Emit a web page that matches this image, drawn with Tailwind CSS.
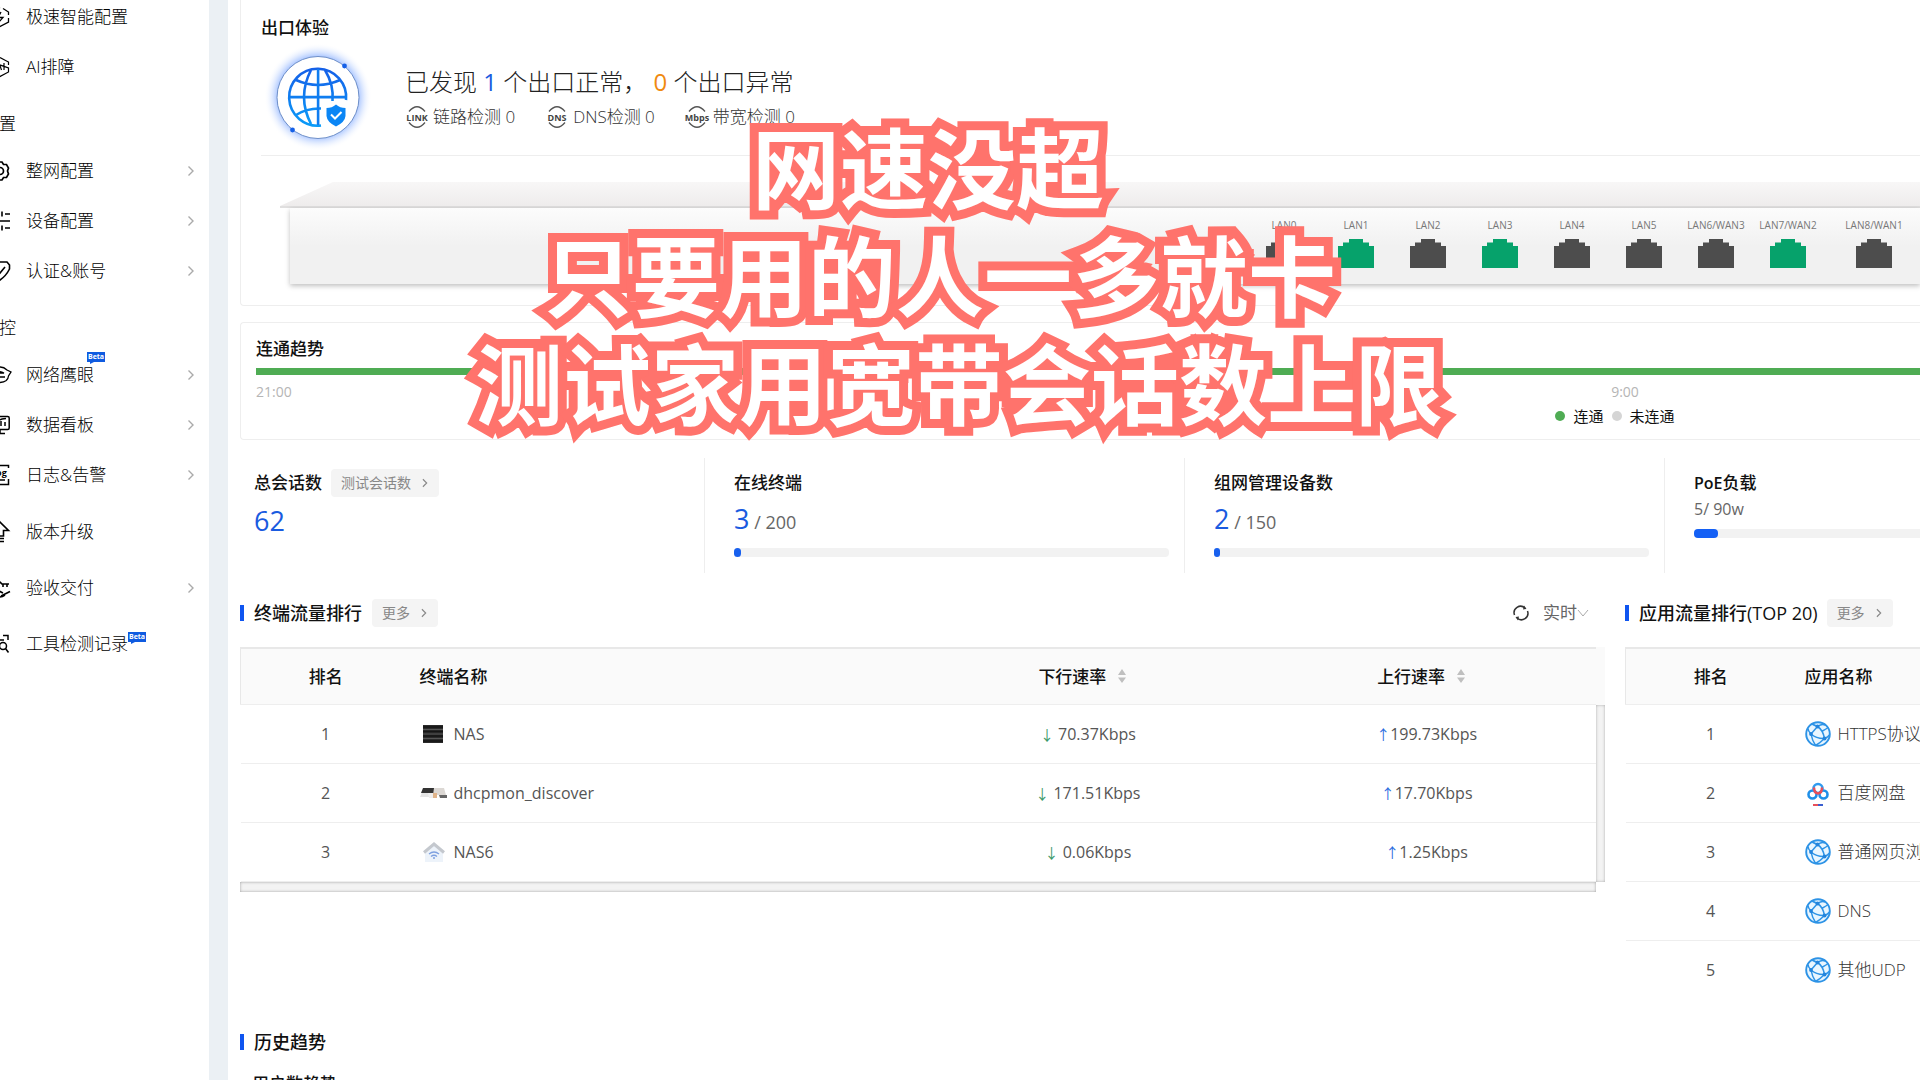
<!DOCTYPE html>
<html lang="zh-CN">
<head>
<meta charset="utf-8">
<meta name="viewport" content="width=device-width, initial-scale=1">
<title>网络总览</title>
<script src="https://cdn.jsdelivr.net/npm/@tailwindcss/browser@4"></script>
</head>
<body class="relative flex h-screen overflow-hidden bg-white font-['Open_Sans','Noto_Sans_CJK_SC',sans-serif] text-[17px] leading-6 text-[#111]">

<!-- shared shapes -->
<svg class="hidden" aria-hidden="true">
  <symbol id="chev" viewBox="0 0 8 12"><path d="M1.500 1.500 6 6l-4.500 4.500" fill="none" stroke="currentColor" stroke-width="1.400"/></symbol>
  <symbol id="port" viewBox="0 0 36 29"><path d="M0 7H5V3.500H11V0H25V3.500H31V7H36V29H0Z" fill="currentColor"/></symbol>
  <symbol id="sort" viewBox="0 0 8 14"><path d="M4 0 8 6H0ZM4 14 0 8.500H8Z" fill="#bfbfbf"/></symbol>
  <symbol id="net" viewBox="0 0 26 26">
    <circle cx="13" cy="13" r="11.800" fill="#e9f6ff" stroke="#2d93e6" stroke-width="1.900"/>
    <g fill="none" stroke="#2d93e6" stroke-width="1.500"><path d="M12.500 5.500 6 13M12.500 5.500Q18 9 19.500 17.500M6 13Q12 18 19.500 17.500M12.500 5.500Q17 2.500 20 4M12.500 5.500Q9 4 7 3M6 13Q3 10 3 7.500M6 13Q7 19 10.500 24.500M19.500 17.500Q15 22 10.500 24.500M19.500 17.500Q23 16 24.500 14M17.500 10Q21 8 22.500 7"/></g>
    <g fill="#2384dc"><circle cx="12.500" cy="5.500" r="2"/><circle cx="6" cy="13" r="1.900"/><circle cx="19.500" cy="17.500" r="2"/></g>
  </symbol>
</svg>

<aside class="w-[209px] shrink-0 overflow-hidden bg-white">
  <nav class="-mt-2 font-light text-black [&_a]:flex [&_a]:h-[50px] [&_a]:items-center [&_a]:gap-4 [&_a]:pr-[14px] [&_a>svg:first-child]:-ml-[10px] [&_a>svg:first-child]:size-5 [&_a>svg:first-child]:shrink-0 [&_a>svg:first-child]:overflow-visible">
    <a href="#"><svg viewBox="0 0 20 20" fill="none" stroke="currentColor" stroke-width="1.300"><path d="M13 1.500 18.500 5V8M18.500 11V15L10 19.500 1.500 15V5L10 .500M11 5 8 10.500H13L9 15"/></svg>极速智能配置</a>
    <a href="#"><svg viewBox="0 0 20 20" fill="none" stroke="currentColor" stroke-width="1.200"><path d="M10 .500 18.500 5V8M18.500 11V15L10 19.500 1.500 15V5ZM6 13 9 6 11.500 13M14 6V13"/></svg>AI排障</a>
    <h2 class="-ml-[18px] h-[54px] pt-5">配置</h2>
    <a href="#"><svg viewBox="0 0 20 20" fill="none" stroke="currentColor" stroke-width="1.700"><path d="M8 1H12L13.500 3.500 16.500 3.500 18.500 7 17.500 10 18.500 13 16.500 16.500 13.500 16.500 12 19H8L6.500 16.500 3.500 16.500 1.500 13 2.500 10 1.500 7 3.500 3.500 6.500 3.500Z"/><circle cx="10" cy="10" r="3.500"/></svg><span class="flex-1">整网配置</span><svg class="h-3 w-2 text-[#aaa]"><use href="#chev"/></svg></a>
    <a href="#"><svg viewBox="0 0 20 20" fill="none" stroke="currentColor" stroke-width="1.600"><path d="M1 3H8M15 3H20M12 .500V5.500M1 10H20M1 17H8M15 17H20M12 14.500V19.500"/></svg><span class="flex-1">设备配置</span><svg class="h-3 w-2 text-[#aaa]"><use href="#chev"/></svg></a>
    <a href="#"><svg viewBox="0 0 20 20" fill="none" stroke="currentColor" stroke-width="1.600"><path d="M3 1H17L19.500 4 19.500 8Q16 15 10 19 4 15 1 8V4ZM6 8 10 12 15 6"/></svg><span class="flex-1">认证&amp;账号</span><svg class="h-3 w-2 text-[#aaa]"><use href="#chev"/></svg></a>
    <h2 class="-ml-[18px] h-[54px] pt-5">监控</h2>
    <a href="#"><svg viewBox="0 0 20 20" fill="none" stroke="currentColor" stroke-width="1.300"><path d="M2 5Q11-1 17 5L21 7 18.500 11Q18 17 10 17.500M2 8Q8 5 14 8H9M10 12H15"/></svg><span class="flex-1"><span class="relative">网络鹰眼<span class="absolute -top-[11px] left-[61px] h-[10px] w-[18px] bg-[#0f5be0] text-center text-[7px] leading-[10px] font-bold text-white after:absolute after:top-full after:left-[3px] after:border-t-2 after:border-r-4 after:border-t-[#0f5be0] after:border-r-transparent after:content-['']">Beta</span></span></span><svg class="h-3 w-2 text-[#aaa]"><use href="#chev"/></svg></a>
    <a href="#"><svg viewBox="0 0 20 20" fill="none" stroke="currentColor" stroke-width="1.500"><rect x="1" y="1.500" width="18.200" height="13" rx="1.500"/><path d="M7 11V8M11 11V6M15 11V7M8 5.500 12 4 16 3.500M10 15V18M5 18.500H15"/></svg><span class="flex-1">数据看板</span><svg class="h-3 w-2 text-[#aaa]"><use href="#chev"/></svg></a>
    <a href="#"><svg viewBox="0 0 20 20" fill="none" stroke="currentColor" stroke-width="1.500"><path d="M1 4V.500H18.500V3M1 14V19.500H18.500V14M9 15H15"/><text x="1" y="11" font-size="9" font-weight="700" fill="currentColor" stroke="none">Log</text></svg><span class="flex-1">日志&amp;告警</span><svg class="h-3 w-2 text-[#aaa]"><use href="#chev"/></svg></a>
    <div class="mt-1 [&>a]:h-14">
      <a href="#"><svg viewBox="0 0 20 20" fill="none" stroke="currentColor" stroke-width="1.600"><path d="M10 0 18.500 8.500H13.500V14H6.500V8.500H1.500ZM6 16.500H14M6 19.500H14"/></svg>版本升级</a>
      <a href="#"><svg viewBox="0 0 20 20" fill="none" stroke="currentColor" stroke-width="1.600"><path d="M4 4H10L12 6H19M13 6V9M17 6V9M1 13H9L13 15M11 18 20 13.500M1 19H9Q12 19 15 17"/></svg><span class="flex-1">验收交付</span><svg class="h-3 w-2 text-[#aaa]"><use href="#chev"/></svg></a>
      <a href="#"><svg viewBox="0 0 20 20" fill="none" stroke="currentColor" stroke-width="1.500"><path d="M13 1.500H18V6M7 1.500H2V6M2 13V18.500H8M8 6H14M6 6V13"/><circle cx="13" cy="12" r="3.500"/><path d="M15.500 14.500 18.500 18.500"/></svg><span class="relative">工具检测记录<span class="absolute top-0 left-[102px] h-[10px] w-[18px] bg-[#0f5be0] text-center text-[7px] leading-[10px] font-bold text-white after:absolute after:top-full after:left-[3px] after:border-t-2 after:border-r-4 after:border-t-[#0f5be0] after:border-r-transparent after:content-['']">Beta</span></span></a>
    </div>
  </nav>
</aside>
<div class="w-[19px] shrink-0 bg-[#ebf0f4]"></div>

<main class="min-w-0 flex-1 pl-3">

  <section class="rounded-bl border-b border-l border-[#eee] pt-4 pb-[21px] pl-5">
    <h2 class="font-medium">出口体验</h2>
    <div class="mt-2 flex h-[98px] gap-[30px]">
      <svg class="h-[98px] w-[114px] shrink-0 overflow-visible" viewBox="0 0 114 98">
        <defs>
          <radialGradient id="halo"><stop offset=".7" stop-color="#8db2ff"/><stop offset=".82" stop-color="#c8daff" stop-opacity=".8"/><stop offset="1" stop-color="#fff" stop-opacity="0"/></radialGradient>
          <linearGradient id="gb" x1="0" y1="0" x2="0" y2="1"><stop offset="0" stop-color="#1560e8"/><stop offset="1" stop-color="#0a9bf8"/></linearGradient>
        </defs>
        <circle cx="57" cy="49" r="54" fill="url(#halo)"/>
        <circle cx="57" cy="49.500" r="41" fill="#fff" stroke="#6e8fc8"/>
        <circle cx="83.500" cy="18" r="2.400" fill="#1560e8"/><circle cx="31.500" cy="82" r="2.400" fill="#1560e8"/>
        <g fill="none" stroke="url(#gb)" stroke-width="2.600">
          <path d="M60 77.500A28.500 28.500 0 1 1 85 52"/>
          <path d="M50 22Q36 49 50 76M64 22Q73 37 71.500 53M35 32Q57 42 79 32M35 67Q46 60 60 60.500"/>
        </g>
        <path d="M57.100 21V77" stroke="#0f7df0" stroke-width="2.600"/><path d="M28.500 49.100H85.500" stroke="#0f7df0" stroke-width="2.600"/>
        <path d="M75 56.500Q79 60 84.500 60V68Q84 74 75 78.500 66 74 65.500 68V60Q71 60 75 56.500Z" fill="#0b86f5"/>
        <path d="M70 66.500 74 70.500 80.500 64" fill="none" stroke="#fff" stroke-width="2"/>
      </svg>
      <div class="pt-4">
        <p class="h-9 text-[24px] leading-9 font-light whitespace-pre text-[#222]">已发现 <span class="font-normal text-[#1a5be0]">1</span> 个出口正常， <span class="font-normal text-[#f08a10]">0</span> 个出口异常</p>
        <ul class="flex h-[34px] items-center gap-[30px] font-light text-[#333]">
          <li class="flex items-center gap-1"><svg class="h-6 w-6" viewBox="0 0 24 24"><path d="M4 6.500Q12-3 20 6.500M4 17.500Q12 27 20 17.500" fill="none" stroke="#555" stroke-width="1.300"/><text x="12" y="15.500" font-size="9" font-weight="700" text-anchor="middle" fill="#444">LINK</text></svg>链路检测 0</li>
          <li class="flex items-center gap-1"><svg class="h-6 w-6" viewBox="0 0 24 24"><path d="M4 6.500Q12-3 20 6.500M4 17.500Q12 27 20 17.500" fill="none" stroke="#555" stroke-width="1.300"/><text x="12" y="15.500" font-size="9" font-weight="700" text-anchor="middle" fill="#444">DNS</text></svg>DNS检测 0</li>
          <li class="flex items-center gap-1"><svg class="h-6 w-6 overflow-visible" viewBox="0 0 24 24"><path d="M4 6.500Q12-3 20 6.500M4 17.500Q12 27 20 17.500" fill="none" stroke="#555" stroke-width="1.300"/><text x="12" y="15.500" font-size="9" font-weight="700" text-anchor="middle" fill="#444">Mbps</text></svg>带宽检测 0</li>
        </ul>
      </div>
    </div>
    <hr class="mt-[9px] border-[#eee]">
    <div class="mt-[26px] ml-[19px] h-6 bg-linear-to-b from-[#f8f7f7] to-[#eeecec] [clip-path:polygon(53px_0,100%_0,100%_100%,0_100%)]"></div>
    <div class="ml-[19px] h-0.5 bg-[#e0dfdf]"></div>
    <ul class="ml-[29px] flex h-[76px] justify-end bg-linear-to-b from-[#fcfcfc] to-[#f1f1f1] to-50% pt-[10px] pr-[10px] text-[10px] leading-[14px] text-[#777] shadow-[0_2px_5px_rgba(0,0,0,0.25)] [&>li]:flex [&>li]:w-[72px] [&>li]:flex-col [&>li]:items-center [&>li]:gap-[7px] [&_svg]:h-[29px] [&_svg]:w-9">
      <li>LAN0<svg class="text-[#4d4d4d]"><use href="#port"/></svg></li>
      <li>LAN1<svg class="text-[#06a26b]"><use href="#port"/></svg></li>
      <li>LAN2<svg class="text-[#4d4d4d]"><use href="#port"/></svg></li>
      <li>LAN3<svg class="text-[#06a26b]"><use href="#port"/></svg></li>
      <li>LAN4<svg class="text-[#4d4d4d]"><use href="#port"/></svg></li>
      <li>LAN5<svg class="text-[#4d4d4d]"><use href="#port"/></svg></li>
      <li>LAN6/WAN3<svg class="text-[#4d4d4d]"><use href="#port"/></svg></li>
      <li>LAN7/WAN2<svg class="text-[#06a26b]"><use href="#port"/></svg></li>
      <li class="ml-[14px]">LAN8/WAN1<svg class="text-[#4d4d4d]"><use href="#port"/></svg></li>
    </ul>
  </section>

  <section class="mt-4 rounded-l border-y border-l border-[#eee] pt-[14px] pb-[13px] pl-[15px]">
    <h2 class="font-medium">连通趋势</h2>
    <div class="mt-[7px] h-[7px] bg-[#4fac54]"></div>
    <div class="mt-[7px] flex h-5 items-center justify-between text-sm text-[#b5b5b5]"><span>21:00</span><span class="w-[590px] text-center">9:00</span></div>
    <ul class="mt-1 ml-auto flex h-5 w-[610px] items-center justify-center gap-2 text-[15px]">
      <li class="flex items-center gap-2"><i class="size-[10px] rounded-full bg-[#4fac54]"></i>连通</li>
      <li class="flex items-center gap-2"><i class="size-[10px] rounded-full bg-[#d5d5d5]"></i>未连通</li>
    </ul>
  </section>

  <section class="mt-[18px] grid h-[115px] grid-cols-[465fr_480fr_480fr_255px] [&>div]:pt-[11px] [&>div:not(:last-child)]:border-r [&>div:not(:last-child)]:border-[#eee] [&_h3]:flex [&_h3]:h-7 [&_h3]:items-center [&_h3]:font-medium">
    <div class="pl-[14px]">
      <div class="flex gap-[9px]"><h3>总会话数</h3><button class="flex h-7 items-center gap-2.5 rounded bg-[#f4f4f4] px-2.5 text-[14px] text-[#888]">测试会话数<svg class="h-[10px] w-2"><use href="#chev"/></svg></button></div>
      <p class="mt-1.5 h-9 text-[27px] leading-9 text-[#1a5be0]">62</p>
    </div>
    <div class="pr-[15px] pl-[29px]">
      <h3>在线终端</h3>
      <p class="mt-1 h-9 text-[18px] leading-9 text-[#666]"><span class="text-[27px] text-[#1a5be0]">3</span> / 200</p>
      <div class="mt-[11px] h-[9px] rounded-[4px] bg-[#f2f2f2]"><div class="h-full rounded-full bg-[#1860ee]" style="width:1.5%"></div></div>
    </div>
    <div class="pr-[15px] pl-[29px]">
      <h3>组网管理设备数</h3>
      <p class="mt-1 h-9 text-[18px] leading-9 text-[#666]"><span class="text-[27px] text-[#1a5be0]">2</span> / 150</p>
      <div class="mt-[11px] h-[9px] rounded-[4px] bg-[#f2f2f2]"><div class="h-full rounded-full bg-[#1860ee]" style="width:1.3%"></div></div>
    </div>
    <div class="pl-[29px]">
      <h3><span class="text-base font-semibold">PoE</span>负载</h3>
      <p class="text-base text-[#666]">5/ 90w</p>
      <div class="mt-2 h-[9px] rounded-l-[4px] bg-[#f2f2f2]"><div class="h-full w-6 rounded-[4px] bg-[#1460f5]"></div></div>
    </div>
  </section>

  <div class="mt-[26px] grid grid-cols-[minmax(0,1fr)_295px] gap-5">
    <section>
      <header class="flex h-7 items-center">
        <i class="mr-2.5 h-4 w-1 bg-[#0f55f0]"></i><h2 class="text-[18px] font-medium">终端流量排行</h2>
        <button class="ml-[10px] flex h-7 items-center gap-2.5 rounded bg-[#f4f4f4] px-2.5 text-[14px] text-[#888]">更多<svg class="h-[10px] w-2"><use href="#chev"/></svg></button>
        <button class="mr-3.5 ml-auto" aria-label="刷新"><svg class="size-4" viewBox="0 0 16 16" fill="none" stroke="#333" stroke-width="1.500"><path d="M1.500 10A6.500 6.500 0 0 1 12 3M14.500 6A6.500 6.500 0 0 1 4 13"/><path d="M11 .500 13.500 4 10 4.500ZM5 15.500 2.500 12 6 11.500Z" fill="#333" stroke="none"/></svg></button>
        <select aria-label="时间范围" class="appearance-none bg-transparent text-[#666]"><option>实时</option></select>
        <svg class="mr-4 h-2 w-3" viewBox="0 0 12 8"><path d="M1 1 6 7 11 1" fill="none" stroke="#aaa"/></svg>
      </header>
      <div class="mt-5 flex">
        <table class="w-full min-w-0 flex-1 table-fixed text-base text-[#555]">
          <colgroup><col class="w-[170px]"><col class="w-[508px]"><col><col></colgroup>
          <thead class="border-t-2 border-b border-l border-t-[#e8e8e8] border-b-[#eee] border-l-[#e8e8e8] bg-[#fafafa] text-[17px] text-[#111] [&_th]:font-medium">
            <tr class="h-14"><th>排名</th><th class="pl-[9px] text-left">终端名称</th>
            <th><button class="inline-flex items-center gap-3 pr-[11px]">下行速率<svg class="h-[14px] w-2"><use href="#sort"/></svg></button></th>
            <th><button class="inline-flex items-center gap-3 pr-[11px]">上行速率<svg class="h-[14px] w-2"><use href="#sort"/></svg></button></th></tr>
          </thead>
          <tbody class="text-center [&>tr]:h-[59px] [&>tr]:border-b [&>tr]:border-[#eee] [&_b]:text-[14px] [&_b]:font-normal">
            <tr><td>1</td><td class="pl-[9px]"><div class="flex items-center gap-1.5"><svg class="h-5 w-7" viewBox="0 0 28 20"><rect x="3" y="1" width="20" height="18" fill="#2b2b2b"/><path d="M3 5.500H23M3 10H23M3 14.500H23" stroke="#555"/><path d="M3 3H23M3 7.500H23M3 12H23M3 17H23" stroke="#151515" stroke-width="1.500"/></svg>NAS</div></td><td><b class="text-[#3c9a6a]">↓</b> 70.37Kbps</td><td><b class="text-[#2a6be0]">↑</b>199.73Kbps</td></tr>
            <tr><td>2</td><td class="pl-[9px]"><div class="flex items-center gap-1.5"><svg class="h-3 w-7" viewBox="0 0 28 12"><path d="M0 10 3 3H10V10Z" fill="#e4e4e4"/><path d="M3 1H14V6H1Z" fill="#333"/><path d="M14 1H24L26 8H13Z" fill="#dcd8d4"/><path d="M8 6H13V11H9Z" fill="#eee"/><path d="M13 6H17V11H13Z" fill="#e0b48a"/><path d="M19 8H27V11H20Z" fill="#666"/></svg>dhcpmon_discover</div></td><td><b class="text-[#3c9a6a]">↓</b> 171.51Kbps</td><td><b class="text-[#2a6be0]">↑</b>17.70Kbps</td></tr>
            <tr><td>3</td><td class="pl-[9px]"><div class="flex items-center gap-1.5"><svg class="h-5 w-7" viewBox="0 0 28 20"><path d="M5 10 14 3 23 10V20H5Z" fill="#edf3fa"/><path d="M4 10.500 14 2 24 10.500" fill="none" stroke="#c4c8ce" stroke-width="3"/><path d="M9 12Q14 8 19 12M11 14.500Q14 12 17 14.500" fill="none" stroke="#7da0e0" stroke-width="1.300"/><circle cx="14" cy="16" r="1" fill="#7da0e0"/></svg>NAS6</div></td><td><b class="text-[#3c9a6a]">↓</b> 0.06Kbps</td><td><b class="text-[#2a6be0]">↑</b>1.25Kbps</td></tr>
          </tbody>
        </table>
        <div class="flex w-[9px] shrink-0 flex-col"><div class="h-[58px] bg-[#fafafa]"></div><div class="flex-1 bg-[#f3f3f3] shadow-[inset_0_0_3px_rgba(0,0,0,0.3)]"></div></div>
      </div>
      <div class="mr-[9px] h-[10px] bg-[#f3f3f3] shadow-[inset_0_0_3px_rgba(0,0,0,0.35)]"></div>
    </section>

    <section class="overflow-hidden whitespace-nowrap">
      <header class="flex h-7 items-center">
        <i class="mr-2.5 h-4 w-1 bg-[#0f55f0]"></i><h2 class="text-[18px] font-medium">应用流量排行<span class="font-normal">(TOP 20)</span></h2>
        <button class="ml-[9px] flex h-7 items-center gap-2.5 rounded bg-[#f4f4f4] px-2.5 text-[14px] text-[#888]">更多<svg class="h-[10px] w-2"><use href="#chev"/></svg></button>
      </header>
      <table class="mt-5 w-full table-fixed text-base text-[#555]">
        <colgroup><col class="w-[170px]"><col></colgroup>
        <thead class="border-t-2 border-b border-l border-t-[#e8e8e8] border-b-[#eee] border-l-[#e8e8e8] bg-[#fafafa] text-[17px] text-[#111] [&_th]:font-medium">
          <tr class="h-14"><th>排名</th><th class="pl-[9px] text-left">应用名称</th></tr>
        </thead>
        <tbody class="[&>tr]:h-[59px] [&>tr:not(:last-child)]:border-b [&>tr]:border-[#eee] [&_td:first-child]:text-center [&_td:last-child]:pl-[9px] [&_td:last-child]:text-[17px] [&_td:last-child]:font-light [&_td:last-child]:text-[#333]">
          <tr><td>1</td><td><div class="flex items-center gap-[7px]"><svg class="size-[26px] shrink-0"><use href="#net"/></svg>HTTPS协议</div></td></tr>
          <tr><td>2</td><td><div class="flex items-center gap-[7px]"><svg class="size-[26px] shrink-0" viewBox="0 0 26 26" fill="none" stroke-width="2.600"><circle cx="7.500" cy="14.500" r="4" stroke="#1f8fe8"/><circle cx="18.500" cy="14.500" r="4" stroke="#1f8fe8"/><circle cx="13" cy="8.500" r="4.500" stroke="#2f9bf0"/><path d="M9 7.500Q9 13 13 13.500 17 13 17 7.500" stroke="#e8505a"/><path d="M8 25H13" stroke="#e8505a" stroke-width="2"/><path d="M13 25H18" stroke="#3a5fd0" stroke-width="2"/></svg>百度网盘</div></td></tr>
          <tr><td>3</td><td><div class="flex items-center gap-[7px]"><svg class="size-[26px] shrink-0"><use href="#net"/></svg>普通网页浏览</div></td></tr>
          <tr><td>4</td><td><div class="flex items-center gap-[7px]"><svg class="size-[26px] shrink-0"><use href="#net"/></svg>DNS</div></td></tr>
          <tr><td>5</td><td><div class="flex items-center gap-[7px]"><svg class="size-[26px] shrink-0"><use href="#net"/></svg>其他UDP</div></td></tr>
        </tbody>
      </table>
    </section>
  </div>

  <section class="mt-[29px]">
    <header class="flex h-7 items-center"><i class="mr-2.5 h-4 w-1 bg-[#0f55f0]"></i><h2 class="text-[18px] font-medium">历史趋势</h2></header>
    <h3 class="mt-4 ml-3 font-medium">用户数趋势</h3>
  </section>
</main>

<!-- video caption laid over the page -->
<div class="pointer-events-none absolute top-[114px] left-[475px] text-[88px] leading-[108px] font-bold whitespace-nowrap text-white [-webkit-text-stroke:18px_#ff736c] [paint-order:stroke_fill]">
  <p class="ml-[277px]">网速没超</p>
  <p class="ml-[69px]">只要用的人一多就卡</p>
  <p>测试家用宽带会话数上限</p>
</div>
</body>
</html>
